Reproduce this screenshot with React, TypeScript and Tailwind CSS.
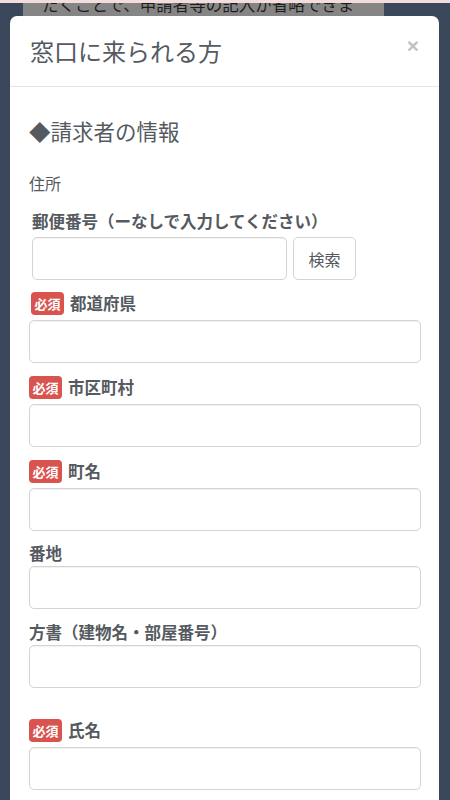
import React from 'react';

const font = { fontFamily: '"Noto Sans CJK JP", "Noto Sans", sans-serif' };

function Badge({ shift }: { shift?: boolean }) {
  return (
    <span
      className={`inline-flex h-[23px] w-[33px] items-center justify-center rounded-[4px] bg-[#d9534f] text-[13px] font-bold leading-none text-white ${
        shift ? 'ml-[2px]' : ''
      }`}
    >
      必須
    </span>
  );
}

function TextInput() {
  return (
    <input
      type="text"
      className="block h-[43px] w-full rounded-[5px] border border-[#d4d4d4] bg-white px-3 text-[16px] shadow-[inset_0_1px_1px_rgba(0,0,0,0.06)] outline-none"
    />
  );
}

interface FieldProps {
  label: string;
  required?: boolean;
  shift?: boolean;
  top: string;
}

function Field({ label, required, shift, top }: FieldProps) {
  return (
    <div className={top}>
      {required ? (
        <div className="flex h-[23px] items-center gap-[6px]">
          <Badge shift={shift} />
          <span className="text-[16.5px] font-bold leading-none text-[#555a60]">{label}</span>
        </div>
      ) : (
        <div className="flex h-[20px] items-center text-[16.5px] font-bold leading-none text-[#555a60]">{label}</div>
      )}
      <div className={required ? 'mt-[5px]' : 'mt-[3px]'}>
        <TextInput />
      </div>
    </div>
  );
}

export default function App() {
  return (
    <div className="relative h-[800px] w-[450px] overflow-hidden bg-[#3a4659]" style={font}>
      {/* page behind the overlay */}
      <div className="h-[3px] w-full bg-[#f4dcdc]" />
      <div className="ml-[23px] h-[13px] w-[361px] overflow-hidden bg-[#858585]">
        <p className="-mt-[9px] pl-[19px] text-[16.5px] leading-[20px] whitespace-nowrap text-[#1e1e1e]">
          たくことで、申請者等の記入が省略できま
        </p>
      </div>

      {/* modal */}
      <div className="mx-[10px] w-[429px] rounded-t-[7px] bg-white">
        <div className="flex h-[71px] items-start justify-between border-b border-[#e5e5e5] pl-[20px] pr-[20px]">
          <h4 className="mt-[20px] text-[24px] leading-[30px] font-normal text-[#555a60]">窓口に来られる方</h4>
          <button
            className="mt-[19px] text-[21px] font-bold leading-none text-[#c2c2c2]"
            style={{ fontFamily: '"Liberation Sans", Arial, sans-serif' }}
          >
            ×
          </button>
        </div>

        <div className="pl-[19px] pr-[18px] pb-[20px]">
          <h3 className="mt-[30px] text-[21.5px] leading-[28px] font-normal text-[#555a60]">◆請求者の情報</h3>
          <p className="mt-[28px] text-[16px] leading-[20px] text-[#555a60]">住所</p>

          <div className="mt-[18px] pl-[3px]">
            <div className="flex h-[20px] items-center text-[16.5px] font-bold leading-none text-[#555a60]">
              郵便番号（ーなしで入力してください）
            </div>
            <div className="mt-[6px] flex gap-[6px]">
              <div className="w-[255px]">
                <TextInput />
              </div>
              <button className="h-[43px] w-[63px] rounded-[5px] border border-[#d4d4d4] bg-white text-[16px] text-[#555a60]">
                検索
              </button>
            </div>
          </div>

          <Field label="都道府県" required shift top="mt-[12px]" />
          <Field label="市区町村" required top="mt-[13px]" />
          <Field label="町名" required top="mt-[13px]" />
          <Field label="番地" top="mt-[12px]" />
          <Field label="方書（建物名・部屋番号）" top="mt-[13px]" />
          <Field label="氏名" required top="mt-[31px]" />
        </div>
      </div>
    </div>
  );
}
